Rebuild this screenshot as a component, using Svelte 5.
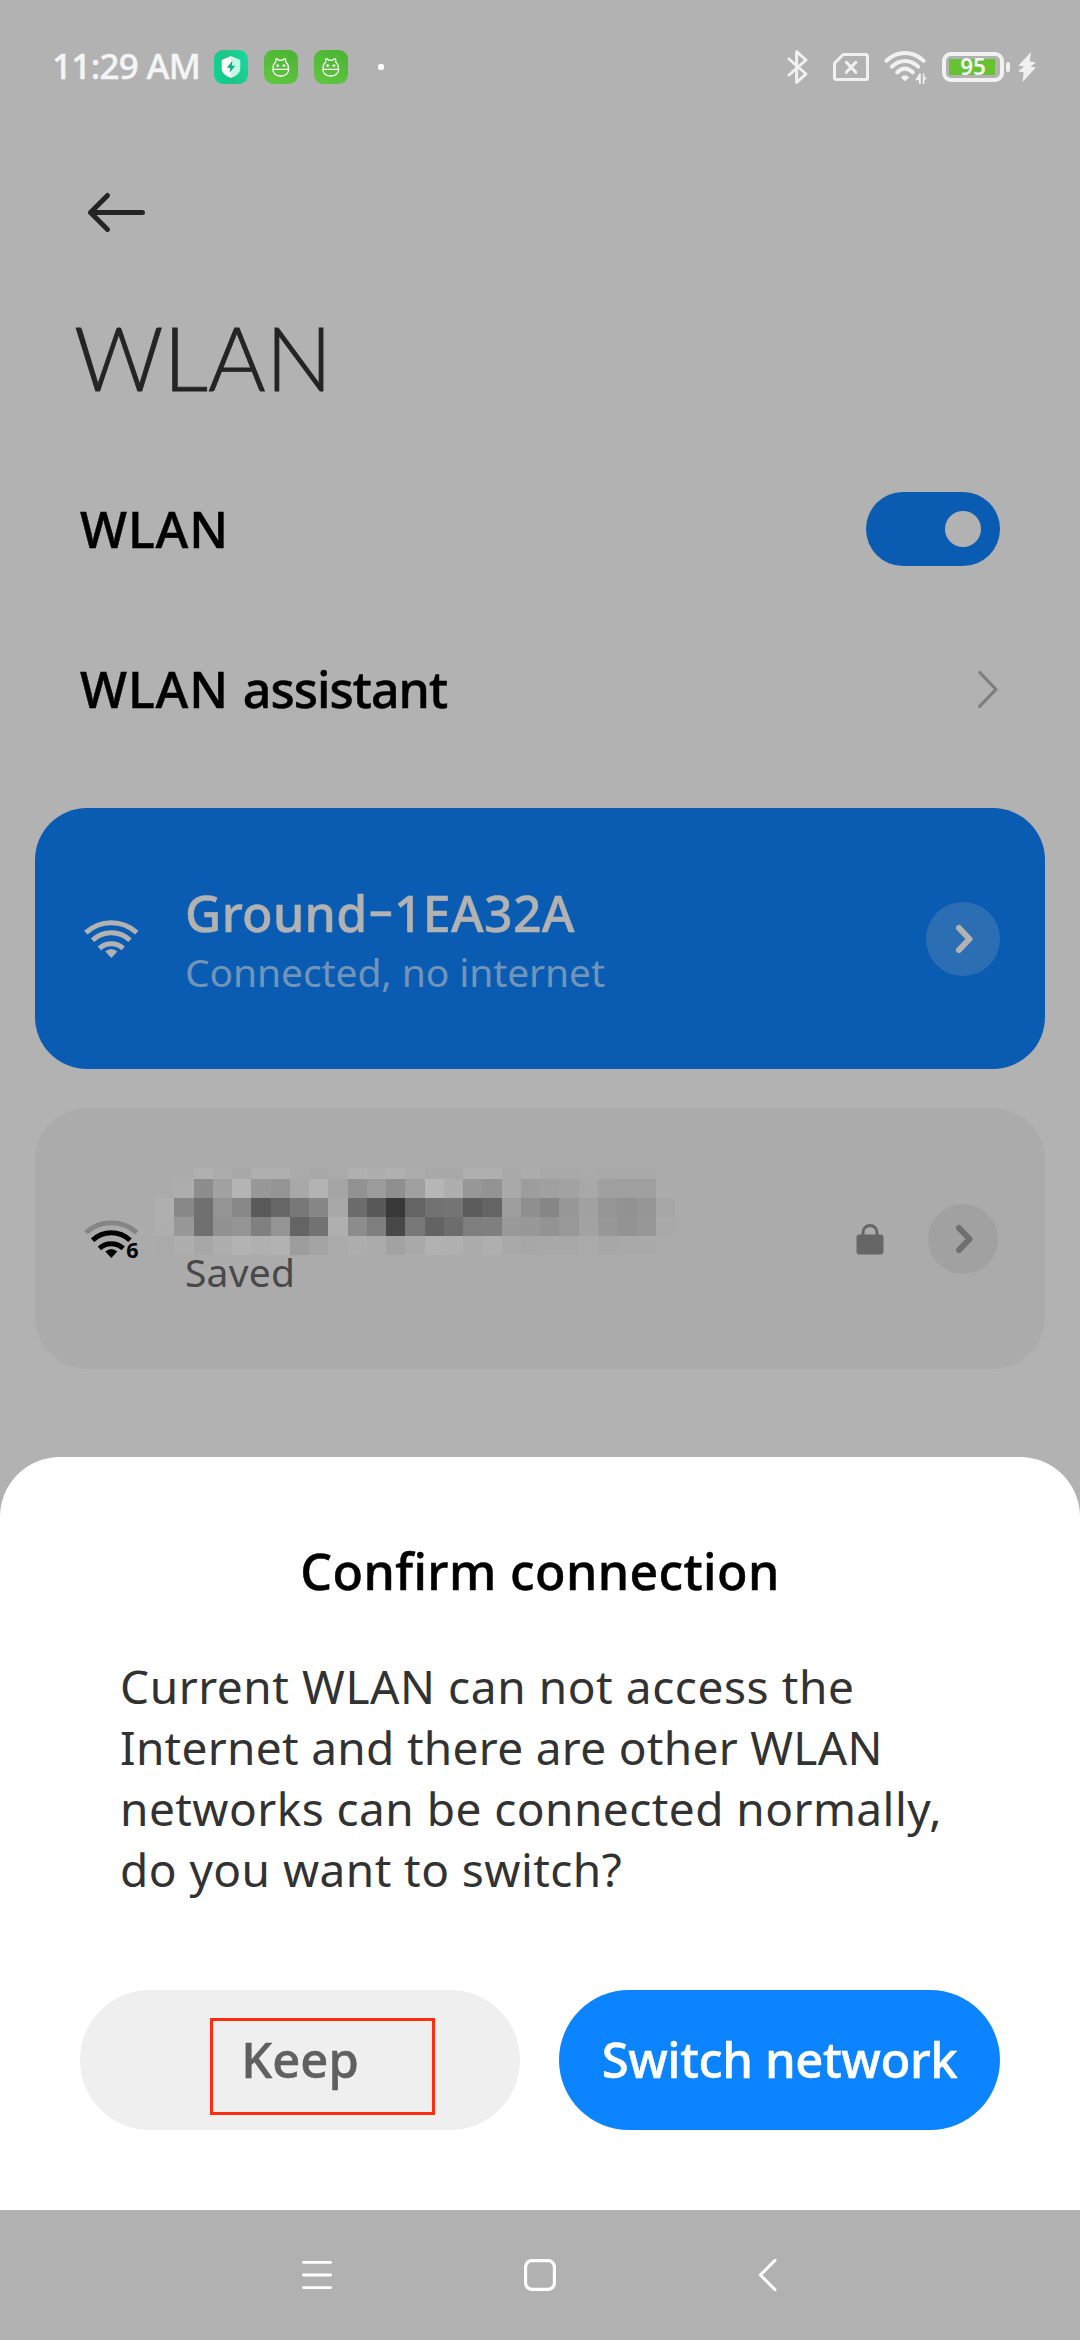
<script>
  const bodyLines = [
    { text: 'Current WLAN can not access the', tracking: 'loose' },
    { text: 'Internet and there are other WLAN', tracking: 'tight' },
    { text: 'networks can be connected normally,', tracking: 'mid' },
    { text: 'do you want to switch?', tracking: 'mid' }
  ];

  // Pixelated network name: each row is a strip of grey levels.
  const strips = [
    { y: 0, h: 11, v: 'ababb0aca8afafaaa8aab0adb0aca8a8afafa9aca9a9aaa9a9a9ab' },
    { y: 11, h: 19, v: 'abad8da1b49894a8b3a5929b8f9fb6ae9793a99da0a2a8a09f9fab' },
    { y: 30, h: 19, v: 'af887094885a677886a86c58386472745c649e8f8698a1969296a6' },
    { y: 49, h: 19, v: 'ae9870919480946472af8c7e4878636d7e7f99989399a2989397a9' },
    { y: 68, h: 19, v: 'aaaea7aeb3b0b29da4aaadaaa2a9b1b0abafa9a7a8a8aaa7a9a9ab' }
  ];
  const edge = (i) => Math.round(i * 19.26);
  const blocks = strips.flatMap(({ y, h, v }) =>
    v.match(/../g).map((g, i) => ({ x: edge(i), w: edge(i + 1) - edge(i), y, h, fill: `#${g}${g}${g}` }))
  );
</script>

{#snippet wifi(six)}
  <svg class="wifi" class:six width="56" height="40" viewBox="0 0 56 40" fill="none" stroke="currentColor" stroke-width="5">
    <path class="outer" d="M1.8 13.6A37.6 37.6 0 0 1 52.8 13.6" />
    <path d="M8.6 21.3A27 27 0 0 1 46 21.3" />
    <path d="M15.4 29.3A17.6 17.6 0 0 1 39.2 29.3" />
    <path d="M27.3 39L21.3 32.6Q27.3 27.6 33.3 32.6Z" fill="currentColor" stroke="none" />
    {#if six}<text x="42.2" y="39.3">6</text>{/if}
  </svg>
{/snippet}

{#snippet robot()}
  <svg class="app green" width="34" height="34" viewBox="0 0 34 34" fill="none" stroke="#fff" stroke-width="1.3">
    <path d="M9.3 19C8.7 15.8 9.7 13.7 11.6 12.3L11.8 9.2Q13.4 7.8 14.7 10.3Q16.7 9.8 18.7 10.3Q20 7.8 21.6 9.2L21.8 12.3C23.7 13.7 24.7 15.8 24.1 19M8.8 19.3H24.7C24.7 23.3 21.2 26 16.7 26S8.8 23.3 8.8 19.3Z" />
    <path d="M12.2 15.6h3M18.4 15.6h3M13.7 14.1v3M19.9 14.1v3" stroke-width="1.2" />
  </svg>
{/snippet}

<div class="phone">
  <header class="status">
    <span class="time">11:29 AM</span>
    <div class="apps">
      <svg class="app shield" width="34" height="34" viewBox="0 0 34 34">
        <path d="M17 6L7.7 10V18.5C7.7 23.5 12.5 26.3 17 28Z" fill="#fff" />
        <path d="M17 6L26.3 10V18.5C26.3 23.5 21.5 26.3 17 28Z" fill="#c3f8e3" />
        <path d="M18.4 10.7L12.8 17.8H16.3L15.4 22.8L21.3 15.7H17.8Z" fill="#12ae83" />
      </svg>
      {@render robot()}
      {@render robot()}
    </div>
    <i class="dot"></i>
    <div class="indicators">
      <svg class="bt" width="22" height="36" viewBox="0 0 22 36" fill="none" stroke="#f1f1f1" stroke-width="3" stroke-linecap="round" stroke-linejoin="round">
        <path d="M2 10L19 25L9.6 33.3V2.7L19 11L2 26" />
      </svg>
      <svg class="sim" width="36" height="28" viewBox="0 0 36 28" fill="none" stroke="#f1f1f1" stroke-width="3" stroke-linecap="round" stroke-linejoin="round">
        <path d="M10.2 1.5H32.5Q34.5 1.5 34.5 3.5V24.5Q34.5 26.5 32.5 26.5H3.5Q1.5 26.5 1.5 24.5V10.3Z" />
        <path d="M13.4 9.3L22.8 19.3M22.8 9.3L13.4 19.3" />
      </svg>
      <svg class="net" width="43" height="34" viewBox="0 0 43 34" fill="none" stroke="#f1f1f1" stroke-width="4" stroke-linecap="round">
        <path d="M2.4 9.8C13.6 -.6 28.4 -.6 39.6 9.8" />
        <path d="M7.8 15.6C15.9 8 26.1 8 34.2 15.6" />
        <path d="M13.2 21.3C18.2 16.6 23.8 16.6 28.8 21.3" />
        <path d="M21 30.2L16.8 26.4Q21 22 25.2 26.4Z" fill="#f1f1f1" stroke="none" />
        <path d="M35.2 22.5H36.8V33H35V29.2H31.2ZM38.8 22.5H40.4V26.4H43.2L40.4 29.6V33H38.8Z" fill="#f1f1f1" stroke="none" />
      </svg>
      <div class="battery"><span>95</span></div>
      <i class="nub"></i>
      <svg class="bolt" width="18" height="30" viewBox="0 0 18 30"><path d="M13 0L.5 13.6L6 14.8L0 19.2L5.6 20.5L4.6 30L17.8 15.6L12.4 14.6L18 10.4L11.8 9.2Z" fill="#f1f1f1" /></svg>
    </div>
  </header>

  <nav class="top">
    <svg width="60" height="42" viewBox="0 0 60 42" fill="none" stroke="#242424" stroke-width="5" stroke-linecap="round" stroke-linejoin="round">
      <path d="M20.5 3.5L3.5 20.5L20.5 37.5M3.5 20.5H55.5" />
    </svg>
  </nav>
  <h1>WLAN</h1>

  <main>
    <div class="row">
      <span class="label">WLAN</span>
      <div class="switch"><i></i></div>
    </div>
    <div class="row">
      <span class="label">WLAN <span class="narrow">assistant</span></span>
      <svg class="more" width="22" height="40" viewBox="0 0 22 40" fill="none" stroke="#7e7e7e" stroke-width="3" stroke-linecap="round" stroke-linejoin="round"><path d="M1.6 3.4L18 20.4L1.6 37.4" /></svg>
    </div>

    <section class="card active">
      {@render wifi(false)}
      <div class="info">
        <strong>Ground<span class="dash">-</span>1EA32A</strong>
        <small>Connected, no internet</small>
      </div>
      <div class="go">
        <svg width="20" height="30" viewBox="0 0 20 30" fill="none" stroke="currentColor" stroke-width="6" stroke-linecap="round" stroke-linejoin="round"><path d="M6 4L16.5 15L6 26" /></svg>
      </div>
    </section>

    <section class="card saved">
      {@render wifi(true)}
      <div class="info">
        <svg class="mosaic" width="520" height="87" viewBox="0 0 520 87" shape-rendering="crispEdges">
          {#each blocks as b}<rect x={b.x} y={b.y} width={b.w} height={b.h} fill={b.fill} />{/each}
        </svg>
        <small>Saved</small>
      </div>
      <svg class="lock" width="28" height="32" viewBox="0 0 28 32"><rect x=".5" y="11.5" width="27" height="20" rx="3" fill="#666" /><path d="M7 13V9.5a7 7 0 0 1 14 0V13" fill="none" stroke="#666" stroke-width="3" /></svg>
      <div class="go">
        <svg width="20" height="30" viewBox="0 0 20 30" fill="none" stroke="currentColor" stroke-width="6" stroke-linecap="round" stroke-linejoin="round"><path d="M6 4L16.5 15L6 26" /></svg>
      </div>
    </section>
  </main>

  <div class="sheet">
    <h2>Confirm connection</h2>
    <p>{#each bodyLines as line}<span class={line.tracking}>{line.text}</span>{/each}</p>
    <div class="actions">
      <button class="keep">Keep<i class="mark"></i></button>
      <button class="primary">Switch network</button>
    </div>
  </div>

  <footer>
    <svg width="34" height="36" viewBox="0 0 34 36" stroke="#fff" stroke-width="2.8" stroke-linecap="round"><path d="M3.4 5.4h27.2M3.4 18h27.2M3.4 30.6h27.2" /></svg>
    <svg width="36" height="36" viewBox="0 0 36 36" fill="none" stroke="#fff" stroke-width="3.2"><rect x="3.6" y="3.6" width="28.8" height="28.8" rx="6.5" /></svg>
    <svg width="34" height="36" viewBox="0 0 34 36" fill="none" stroke="#fff" stroke-width="3" stroke-linecap="round" stroke-linejoin="round"><path d="M29 3.4L14.4 18L29 32.6" /></svg>
  </footer>
</div>

<style>
  .phone {
    display: flex;
    flex-direction: column;
    width: 1080px;
    height: 2340px;
    overflow: hidden;
    background: #b2b2b2;
    color: #000;
    font-family: 'Noto Sans', 'Open Sans', sans-serif;
    white-space: nowrap;
  }
  svg { display: block; flex: none; overflow: visible; }

  .status {
    display: flex;
    align-items: center;
    box-sizing: border-box;
    height: 133px;
    padding: 0 44px 0 52px;
  }
  .time {
    width: 162px;
    color: #f5f5f5;
    font-size: 35px;
    font-weight: 500;
    -webkit-text-stroke: 0.4px;
    letter-spacing: -0.7px;
    line-height: 48px;
    padding-bottom: 2px;
  }
  .apps { display: flex; gap: 16px; }
  .app { border-radius: 9px; overflow: hidden; }
  .shield { background: linear-gradient(70deg, #08d696, #20c486 45%, #12dca2); }
  .green { background: linear-gradient(25deg, #61c843, #49b330); }
  .dot { width: 6px; height: 6px; margin-left: 30px; border-radius: 2px; background: #fff; }
  .indicators { display: flex; align-items: center; margin-left: auto; }
  .bt { margin-right: 24px; }
  .sim { margin-right: 15px; }
  .net { margin: 2px 15px 0 0; }
  .battery {
    display: flex;
    align-items: center;
    justify-content: center;
    box-sizing: border-box;
    width: 62px;
    height: 30px;
    border: 4px solid #f1f1f1;
    border-radius: 9px;
    background: linear-gradient(#67c233, #67c233) 3px center / 46px 16px no-repeat;
    color: #f5f5f5;
    font-size: 22.5px;
    font-weight: 600;
    line-height: 22px;
  }
  .nub { width: 4px; height: 10px; margin: 0 8px 0 2px; border-radius: 2px; background: #f1f1f1; }

  .top { display: flex; align-items: center; height: 159px; padding-left: 87px; }
  h1 {
    margin: 0 0 27px;
    padding-left: 74px;
    color: #242424;
    font: 300 88px/130px Lato, sans-serif;
    -webkit-text-stroke: 0.8px #242424;
  }

  main { height: 1008px; }
  .row {
    display: flex;
    align-items: center;
    justify-content: space-between;
    height: 160px;
    padding: 0 80px;
  }
  .label, strong, h2, button { font-weight: 500; -webkit-text-stroke: 0.5px; }
  .label { font-size: 50px; line-height: 60px; letter-spacing: 0.9px; }
  .narrow { letter-spacing: -1px; }
  .switch {
    display: flex;
    align-items: center;
    justify-content: flex-end;
    box-sizing: border-box;
    width: 134px;
    height: 74px;
    padding-right: 19px;
    border-radius: 37px;
    background: #0a5cb3;
  }
  .switch i { width: 36px; height: 36px; border-radius: 50%; background: #b2b2b2; }

  .card {
    display: flex;
    align-items: center;
    box-sizing: border-box;
    height: 261px;
    margin: 39px 35px 0;
    padding: 0 45px 0 49px;
    border-radius: 52px;
  }
  .active { background: #0a5cb3; color: #b2b2b2; }
  .saved { padding-right: 47px; background: #ababab; color: #000; }
  .six .outer { stroke: #858585; }
  .wifi text { fill: #000; stroke: none; font: 700 21.5px 'Noto Sans', sans-serif; }
  .info { display: flex; flex-direction: column; align-items: flex-start; margin: 2px auto 0 45px; }
  strong { font-size: 50px; line-height: 60px; letter-spacing: 0.3px; }
  .dash { display: inline-block; margin: 0 5px; transform: translateY(-4px) scale(1.6, 0.95); }
  small { margin-top: 4px; font-size: 39px; line-height: 50px; letter-spacing: -0.1px; }
  .active small { color: #7294b7; }
  .saved .info { margin-top: 0; padding-bottom: 12px; }
  .saved small { margin-top: -8px; color: #484848; letter-spacing: 0.2px; }
  .mosaic { margin-left: -30px; }
  .lock { margin-right: 44px; }
  .go {
    display: flex;
    align-items: center;
    justify-content: center;
    width: 74px;
    height: 74px;
    border-radius: 50%;
    background: #2b6eb3;
  }
  .saved .go { width: 70px; height: 70px; background: #a1a1a1; color: #6f6f6f; }

  .sheet {
    box-sizing: border-box;
    height: 753px;
    padding: 84px 80px 0;
    border-radius: 60px 60px 0 0;
    background: #fff;
  }
  h2 {
    margin: 0;
    font-size: 50px;
    line-height: 60px;
    letter-spacing: 0.4px;
    text-align: center;
  }
  p { margin: 55px 0 90px; padding-left: 40px; color: #323232; font-size: 46px; line-height: 61px; }
  p span { display: block; }
  .loose { letter-spacing: 0.57px; }
  .mid { letter-spacing: 0.45px; }
  .tight { letter-spacing: 0.3px; }
  .actions { display: grid; grid-template-columns: 440px 441px; gap: 39px; }
  button {
    position: relative;
    height: 140px;
    padding: 0 0 2px;
    border: 0;
    border-radius: 70px;
    font-family: inherit;
    font-size: 49px;
    line-height: 60px;
  }
  .keep { background: #efefef; color: #606060; }
  .primary { background: #0d84ff; color: #fff; letter-spacing: -0.4px; }
  .mark {
    position: absolute;
    left: 130px;
    top: 28px;
    box-sizing: border-box;
    width: 225px;
    height: 97px;
    border: 3px solid #ff2d0d;
  }

  footer {
    display: flex;
    align-items: center;
    justify-content: space-between;
    box-sizing: border-box;
    height: 130px;
    padding: 0 300px;
    background: #b1b1b1;
  }
</style>
